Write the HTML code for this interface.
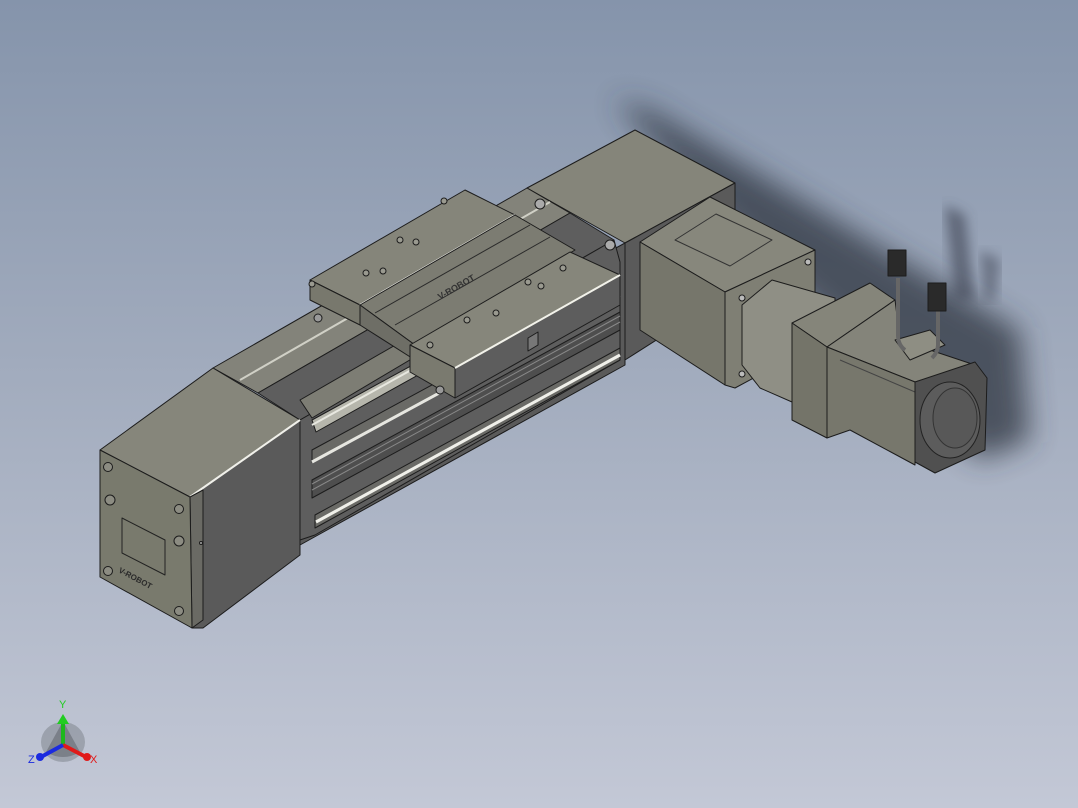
<!DOCTYPE html>
<html><head><style>
html,body{margin:0;padding:0;width:1078px;height:808px;overflow:hidden;}
body{background:linear-gradient(180deg,#8594ab 0%,#a1abbd 45%,#c3c8d6 100%);}
svg{position:absolute;left:0;top:0;}
</style></head><body>
<svg width="1078" height="808" viewBox="0 0 1078 808" xmlns="http://www.w3.org/2000/svg">
<defs>
<filter id="b" x="-20%" y="-20%" width="140%" height="140%"><feGaussianBlur stdDeviation="14"/></filter>
<filter id="b2"><feGaussianBlur stdDeviation="6"/></filter>
</defs>
<g stroke="#1c1c1c" stroke-width="1" stroke-linejoin="round">
<!-- shadow -->
<polygon points="615,100 650,110 760,175 1020,330 1030,440 980,460 900,380 760,260" fill="#2f3540" opacity="0.75" filter="url(#b)" stroke="none"/>
<polygon points="945,205 965,215 975,300 955,300" fill="#3a4150" opacity="0.6" filter="url(#b2)" stroke="none"/>
<polygon points="980,250 1000,260 995,300 985,300" fill="#3a4150" opacity="0.5" filter="url(#b2)" stroke="none"/>

<!-- rear end cap -->
<polygon points="527,188 635,130 735,183 625,243" fill="#85857a"/>
<polygon points="625,243 735,183 735,290 625,360" fill="#5a5a5a"/>
<!-- cap side + profile side -->
<polygon points="190,497 300,420 300,555 203,628 192,628" fill="#5a5a5a"/>
<polygon points="300,420 625,243 625,365 300,545" fill="#5a5a5a"/>
<!-- profile top (back half) -->
<polygon points="213,368 527,188 570,213 258,393" fill="#83837a"/>
<line x1="240" y1="380" x2="550" y2="202" stroke="#d0d0c6" stroke-width="2"/>
<!-- channel -->
<polygon points="258,393 570,213 614,240 300,420" fill="#5e5e5e"/>
<polygon points="300,420 614,240 620,262 620,360 315,535 300,540" fill="#5e5e5e"/>
<polygon points="300,400 560,250 575,262 312,418" fill="#7d7d74"/>
<polygon points="312,420 440,350 445,360 316,432" fill="#b6b6ac"/>
<line x1="312" y1="425" x2="440" y2="354" stroke="#e8e8e0" stroke-width="2"/>
<polygon points="312,450 620,283 620,295 312,462" fill="#6a6a66"/>
<line x1="312" y1="462" x2="620" y2="295" stroke="#e6e6e0" stroke-width="3"/>
<polygon points="312,480 620,312 620,330 312,498" fill="#4e4e4e"/>
<line x1="312" y1="484" x2="620" y2="316" stroke="#888" stroke-width="1"/>
<line x1="312" y1="490" x2="620" y2="322" stroke="#888" stroke-width="1"/>
<polygon points="315,515 620,348 620,360 315,528" fill="#6a6a66"/>
<line x1="316" y1="522" x2="620" y2="355" stroke="#f0f0ea" stroke-width="3"/>

<!-- carriage back plate -->
<polygon points="310,280 465,190 515,215 360,305" fill="#85857a"/>
<polygon points="310,280 360,305 360,325 310,300" fill="#78786d"/>
<line x1="360" y1="305" x2="515" y2="215" stroke="#f0f0ea" stroke-width="2"/>
<!-- carriage middle -->
<polygon points="360,305 515,215 575,250 415,345" fill="#7c7c72"/>
<line x1="375" y1="313" x2="530" y2="225" stroke="#2a2a2a"/>
<line x1="395" y1="325" x2="550" y2="237" stroke="#2a2a2a"/>
<polygon points="360,305 415,345 415,360 360,325" fill="#6e6e66"/>
<text x="440" y="300" font-family="Liberation Sans,sans-serif" font-size="9" font-weight="bold" fill="#333" stroke="none" transform="rotate(-30 440 300)">V-ROBOT</text>
<!-- carriage front plate -->
<polygon points="410,345 570,252 620,275 455,368" fill="#86867b"/>
<polygon points="410,345 455,368 455,398 410,372" fill="#7a7a6f"/>
<polygon points="455,368 620,275 620,305 455,398" fill="#5d5d5d"/>
<line x1="455" y1="368" x2="620" y2="275" stroke="#f2f2ea" stroke-width="2"/>
<polygon points="528,338 538,332 538,345 528,351" fill="#777"/>
<g fill="#9a9a90">
<circle cx="312" cy="284" r="3"/><circle cx="366" cy="273" r="3"/><circle cx="416" cy="242" r="3"/><circle cx="444" cy="201" r="3"/><circle cx="383" cy="271" r="3"/><circle cx="400" cy="240" r="3"/>
<circle cx="430" cy="345" r="3"/><circle cx="467" cy="320" r="3"/><circle cx="496" cy="313" r="3"/><circle cx="528" cy="282" r="3"/><circle cx="563" cy="268" r="3"/><circle cx="541" cy="286" r="3"/>
</g>
<circle cx="318" cy="318" r="4" fill="#999"/><circle cx="440" cy="390" r="4" fill="#999"/>
<circle cx="540" cy="204" r="5" fill="#aaa"/><circle cx="610" cy="245" r="5" fill="#aaa"/>

<!-- front end cap -->
<polygon points="100,450 213,368 300,420 190,497" fill="#86867b"/>
<line x1="190" y1="497" x2="300" y2="420" stroke="#f0f0ea" stroke-width="2"/>
<polygon points="190,497 203,490 203,620 192,628" fill="#6a6a64"/>
<polygon points="100,450 190,497 192,628 100,577" fill="#797a6d"/>
<polygon points="122,518 165,540 165,575 122,553" fill="none" stroke="#222"/>
<text x="118" y="572" font-family="Liberation Sans,sans-serif" font-size="8" font-weight="bold" fill="#2a2a2a" stroke="none" transform="rotate(28 118 572)">V-ROBOT</text>
<g fill="#8c8c82">
<circle cx="108" cy="467" r="4.5"/><circle cx="110" cy="500" r="5"/><circle cx="108" cy="571" r="4.5"/>
<circle cx="179" cy="509" r="4.5"/><circle cx="179" cy="541" r="5"/><circle cx="179" cy="611" r="4.5"/>
</g>
<circle cx="201" cy="543" r="1.5" fill="#aaa"/>

<!-- gearbox -->
<polygon points="640,242 710,197 815,250 725,292" fill="#87877c"/>
<polygon points="675,240 716,214 772,240 730,266" fill="none" stroke="#333"/>
<polygon points="640,242 725,292 725,385 640,330" fill="#76766b"/>
<polygon points="725,292 815,250 815,345 735,388 725,385" fill="#7f7f74"/>
<circle cx="742" cy="298" r="3" fill="#bbb"/><circle cx="808" cy="262" r="3" fill="#bbb"/><circle cx="742" cy="374" r="3" fill="#bbb"/>
<!-- cylinder -->
<polygon points="742,305 772,280 835,298 835,322 792,328 792,402 760,388 742,365" fill="#8f8f85"/>
<!-- motor flange -->
<polygon points="792,323 870,283 895,300 827,347" fill="#85857a"/>
<polygon points="792,323 827,347 827,438 792,420" fill="#747469"/>
<!-- motor body -->
<polygon points="827,347 895,300 900,340 975,365 915,382" fill="#84847a"/>
<polygon points="827,347 915,382 915,465 850,430 827,438" fill="#77776c"/>
<line x1="840" y1="360" x2="915" y2="392" stroke="#444"/>
<polygon points="895,340 930,330 945,345 910,360" fill="#8e8e83"/>
<polygon points="915,382 975,362 987,378 985,450 935,473 915,462" fill="#505050"/>
<ellipse cx="950" cy="420" rx="30" ry="38" fill="#5c5c5c" stroke="#222"/>
<ellipse cx="955" cy="418" rx="22" ry="30" fill="#585858" stroke="#333"/>
<!-- cables -->
<path d="M898,278 L898,335 Q898,345 905,350" stroke="#666" stroke-width="4" fill="none"/>
<path d="M938,310 L938,345 Q938,352 932,358" stroke="#666" stroke-width="4" fill="none"/>
<rect x="888" y="250" width="18" height="26" fill="#2a2a2a"/>
<rect x="928" y="283" width="18" height="28" fill="#2a2a2a"/>
</g>

<!-- axis triad -->
<g>
<ellipse cx="63" cy="742" rx="22" ry="20" fill="#7a7f88" opacity="0.5"/>
<path d="M63,721 L46,752 Q63,762 80,752 Z" fill="#5a5e66" opacity="0.5"/>
<line x1="63" y1="745" x2="63" y2="722" stroke="#1db81d" stroke-width="4"/>
<polygon points="57,724 63,714 69,724" fill="#22cc22"/>
<line x1="63" y1="745" x2="86" y2="757" stroke="#e01a1a" stroke-width="4"/>
<circle cx="87" cy="757" r="4" fill="#e01a1a"/>
<line x1="63" y1="745" x2="41" y2="757" stroke="#1a2ae0" stroke-width="4"/>
<circle cx="40" cy="757" r="4" fill="#1a2ae0"/>
<text x="59" y="708" font-family="Liberation Sans,sans-serif" font-size="11" fill="#22cc22">Y</text>
<text x="90" y="763" font-family="Liberation Sans,sans-serif" font-size="11" fill="#e01a1a">X</text>
<text x="28" y="763" font-family="Liberation Sans,sans-serif" font-size="11" fill="#1a2ae0">Z</text>
</g>
</svg>
</body></html>
